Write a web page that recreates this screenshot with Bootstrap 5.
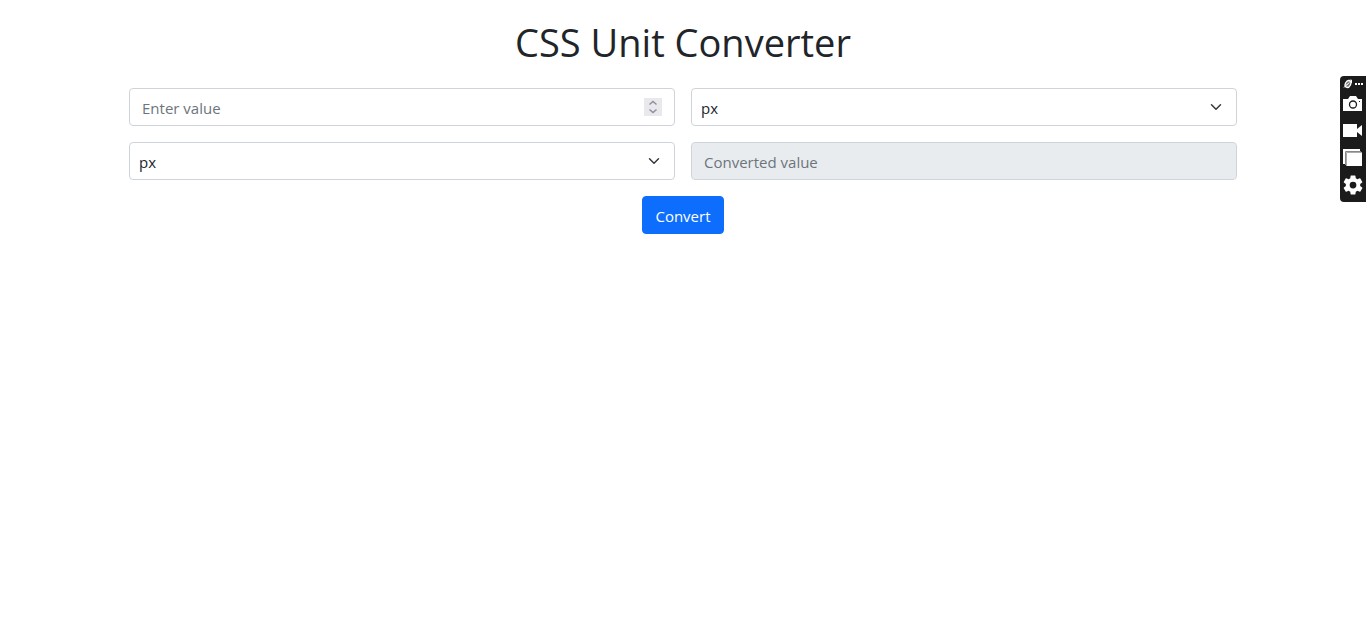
<!DOCTYPE html>
<html lang="en">
<head>
<meta charset="utf-8">
<meta name="viewport" content="width=device-width, initial-scale=1">
<title>CSS Unit Converter</title>
<link href="https://cdn.jsdelivr.net/npm/bootstrap@5.3.0/dist/css/bootstrap.min.css" rel="stylesheet">
<style>
body { font-family: "Segoe UI", "Open Sans", "Noto Sans", sans-serif; }
.page-title { font-size: 38px; line-height: 52px; font-weight: 400; margin-bottom: 20px; }
.form-control, .form-select, .btn { font-size: 15px; line-height: 24px; height: 38px; border-radius: 4px; padding-top: 7px; padding-bottom: 5px; }
.form-control, .form-select { border-color: #ced4da; }
.form-control::placeholder { color: #6c757d; }
.form-select { padding-left: 9px; background-size: 14px 12px; background-position: right 13px center; }
.form-control[readonly] { background-color: #e9ecef; }
input[type=number] { appearance: textfield; -moz-appearance: textfield; }
input[type=number]::-webkit-inner-spin-button { appearance: none; -webkit-appearance: none; }
.spinner-box { right: 13px; top: 10px; width: 18px; height: 18px; background: #e9e9ed; pointer-events: none; }
.capture-bar { top: 76px; width: 26px; height: 126px; background: #1b1b1b; border-radius: 4px 0 0 4px; }
.capture-bar button { width: 26px; height: 27px; }
.capture-bar .bar-top { height: 15px; }
</style>
</head>
<body>
<main class="container p-3">
  <h1 class="page-title text-center">CSS Unit Converter</h1>
  <form class="row g-3">
    <div class="col-md-6">
      <div class="position-relative">
        <input type="number" class="form-control" placeholder="Enter value" aria-label="Value">
        <span class="spinner-box position-absolute d-flex">
          <svg width="18" height="18" viewBox="0 0 18 18" fill="none" stroke="#8f8f9d" stroke-width="1.5" aria-hidden="true"><path d="M5.5 6.5 9 3.5l3.5 3M5.5 11.5l3.5 3 3.5-3"/></svg>
        </span>
      </div>
    </div>
    <div class="col-md-6">
      <select class="form-select" aria-label="Source unit"><option>px</option><option>em</option><option>rem</option><option>%</option></select>
    </div>
    <div class="col-md-6">
      <select class="form-select" aria-label="Target unit"><option>px</option><option>em</option><option>rem</option><option>%</option></select>
    </div>
    <div class="col-md-6">
      <input type="text" class="form-control" placeholder="Converted value" aria-label="Converted value" readonly>
    </div>
    <div class="col-12 text-center">
      <button type="button" class="btn btn-primary">Convert</button>
    </div>
  </form>
</main>
<aside class="capture-bar position-fixed end-0 d-flex flex-column" aria-label="Screen capture">
  <button type="button" class="bar-top border-0 p-0 bg-transparent d-flex" aria-label="More options">
    <svg width="26" height="15" viewBox="0 0 26 15" aria-hidden="true"><ellipse cx="8" cy="8" rx="2.600" ry="3.600" transform="rotate(28 8 8)" fill="#777" stroke="#fff" stroke-width="1.300"/><path d="M4 11.500 7.500 8M8 4.500l3.500-.5V7M6.500 9l3-2.500" fill="none" stroke="#fff"/><path d="M15 7h2v2h-2zM18 7h2v2h-2zM21 7h2v2h-2z" fill="#fff"/></svg>
  </button>
  <button type="button" class="border-0 p-0 bg-transparent d-flex" aria-label="Take screenshot">
    <svg width="26" height="27" viewBox="0 0 26 27" aria-hidden="true"><path d="M3 8h5l2-3h6l2 3h4v12H3z" fill="#fff"/><circle cx="13" cy="13.500" r="3.500" fill="#fff" stroke="#1b1b1b" stroke-width="1.300"/><path d="M19 10h1v1h-1z" fill="#1b1b1b"/></svg>
  </button>
  <button type="button" class="border-0 p-0 bg-transparent d-flex" aria-label="Record video">
    <svg width="26" height="27" viewBox="0 0 26 27" aria-hidden="true"><path d="M3 6h14v5l5-4v11l-5-4v5H3z" fill="#fff"/></svg>
  </button>
  <button type="button" class="border-0 p-0 bg-transparent d-flex" aria-label="Gallery">
    <svg width="26" height="27" viewBox="0 0 26 27" aria-hidden="true"><path d="M3 4h17v3H6v12H3z" fill="#fff"/><path d="M5.500 20V6.500H21" fill="none" stroke="#888"/><path d="M6 7h16v14H6z" fill="#fff"/><path d="M6.500 21V7.500H22" fill="none" stroke="#aaa"/></svg>
  </button>
  <button type="button" class="border-0 p-0 bg-transparent d-flex" aria-label="Settings">
    <svg width="26" height="27" viewBox="0 0 26 27" aria-hidden="true"><g transform="translate(1.500 1.500) scale(.96)" fill="#fff"><path d="M19.430 12.980c.04-.32.07-.64.07-.98s-.03-.66-.07-.98l2.110-1.650a.5.5 0 0 0 .12-.64l-2-3.460a.5.5 0 0 0-.61-.22l-2.490 1a7.300 7.300 0 0 0-1.690-.98l-.38-2.650A.49.49 0 0 0 14 2h-4a.49.49 0 0 0-.49.42l-.38 2.650c-.61.25-1.170.59-1.690.98l-2.490-1a.49.49 0 0 0-.61.22l-2 3.460a.49.49 0 0 0 .12.640l2.110 1.650a7.900 7.900 0 0 0 0 1.960l-2.110 1.650a.5.5 0 0 0-.12.640l2 3.460c.12.220.39.300.61.220l2.490-1c.52.400 1.080.730 1.690.980l.38 2.650c.03.240.24.420.49.420h4c.25 0 .46-.18.49-.42l.38-2.650c.61-.25 1.170-.59 1.690-.98l2.490 1c.23.090.49 0 .61-.22l2-3.460a.5.5 0 0 0-.12-.64zM12 15.500a3.500 3.500 0 1 1 0-7 3.500 3.500 0 0 1 0 7z"/></g></svg>
  </button>
</aside>
<script src="https://cdn.jsdelivr.net/npm/bootstrap@5.3.0/dist/js/bootstrap.bundle.min.js"></script>
</body>
</html>
